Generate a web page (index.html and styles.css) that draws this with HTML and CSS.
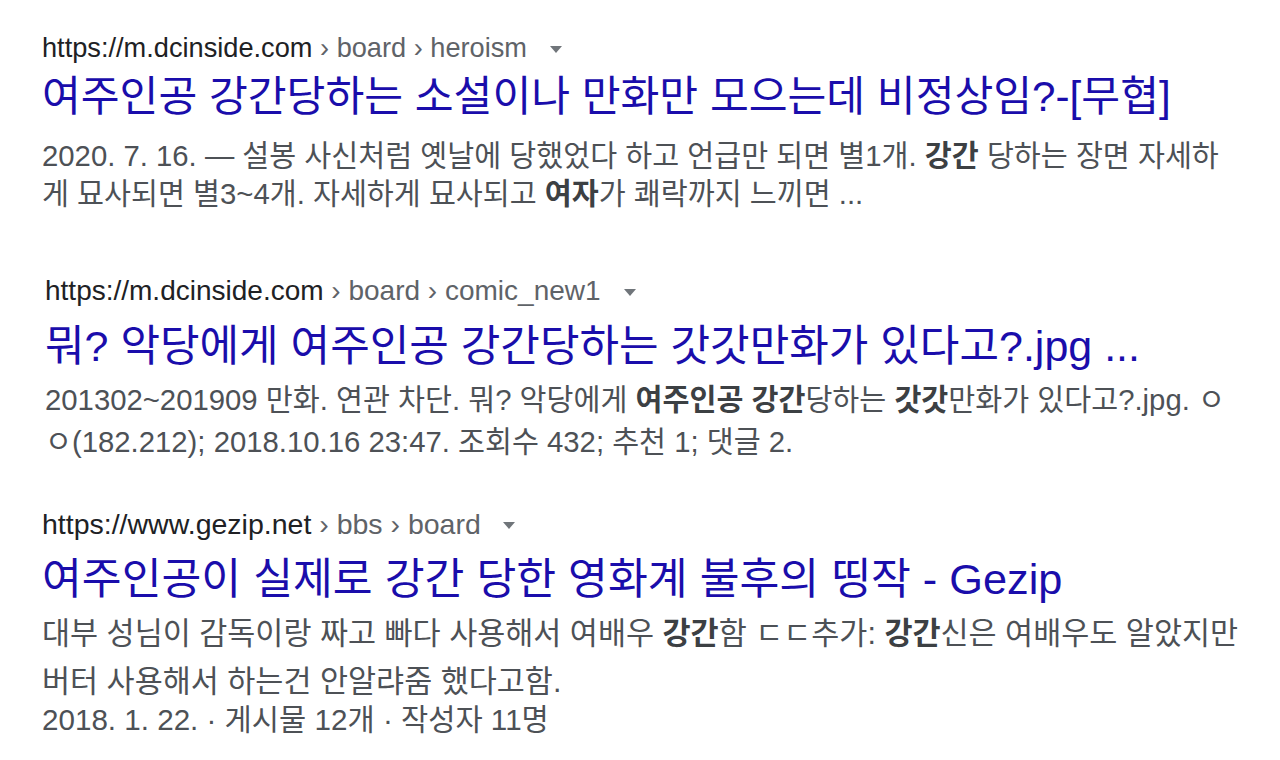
FILE: index.html
```html
<!DOCTYPE html>
<html lang="ko">
<head>
<meta charset="utf-8">
<link rel="stylesheet" href="styles.css">
</head>
<body>
<main class="results">
  <div class="result r1">
    <div class="url"><span class="host">https://m.dcinside.com</span><span class="crumb"> › board › heroism</span><span class="caret"></span></div>
    <div class="title">여주인공 강간당하는 소설이나 만화만 모으는데 비정상임?-[무협]</div>
    <div class="snippet">2020. 7. 16. — 설봉 사신처럼 옛날에 당했었다 하고 언급만 되면 별1개. <b>강간</b> 당하는 장면 자세하<br>게 묘사되면 별3~4개. 자세하게 묘사되고 <b>여자</b>가 쾌락까지 느끼면 ...</div>
  </div>
  <div class="result r2">
    <div class="url"><span class="host">https://m.dcinside.com</span><span class="crumb"> › board › comic_new1</span><span class="caret"></span></div>
    <div class="title">뭐? 악당에게 여주인공 강간당하는 갓갓만화가 있다고?.jpg ...</div>
    <div class="snippet">201302~201909 만화. 연관 차단. 뭐? 악당에게 <b>여주인공</b> <b>강간</b>당하는 <b>갓갓</b>만화가 있다고?.jpg. ㅇ<br>ㅇ(182.212); 2018.10.16 23:47. 조회수 432; 추천 1; 댓글 2.</div>
  </div>
  <div class="result r3">
    <div class="url"><span class="host">https://www.gezip.net</span><span class="crumb"> › bbs › board</span><span class="caret"></span></div>
    <div class="title">여주인공이 실제로 강간 당한 영화계 불후의 띵작 - Gezip</div>
    <div class="snippet">대부 성님이 감독이랑 짜고 빠다 사용해서 여배우 <b>강간</b>함 ㄷㄷ추가: <b>강간</b>신은 여배우도 알았지만<br>버터 사용해서 하는건 안알랴줌 했다고함.</div>
    <div class="meta">2018. 1. 22. · 게시물 12개 · 작성자 11명</div>
  </div>
</main>
</body>
</html>
```

FILE: styles.css
```css
html, body {
  margin: 0;
  padding: 0;
  background: #ffffff;
}
body {
  font-family: "Liberation Sans", "Noto Sans CJK KR", sans-serif;
  width: 1280px;
  height: 760px;
  overflow: hidden;
}
.results {
  display: flex;
  flex-direction: column;
  padding-left: 42px;
}
.url {
  font-size: 27.2px;
  line-height: 30px;
  color: #202124;
  display: flex;
  align-items: center;
  white-space: nowrap;
}
.crumb {
  color: #5f6368;
  white-space: pre;
}
.caret {
  width: 0;
  height: 0;
  border-left: 6px solid transparent;
  border-right: 6px solid transparent;
  border-top: 7px solid #70757a;
  margin-left: 23px;
  margin-top: 2px;
}
.title {
  font-size: 42.2px;
  line-height: 44px;
  color: #1a0dab;
  white-space: nowrap;
}
.snippet, .meta {
  font-size: 29.3px;
  color: #4d5156;
  white-space: nowrap;
}
.snippet b {
  color: #3c4043;
  font-weight: bold;
}
.r1 { margin-top: 33px; }
.r1 .title { margin-top: 12px; }
.r1 .snippet { margin-top: 18px; line-height: 38px; }

.r2 { margin-top: 63px; padding-left: 3px; }
.r2 .url { font-size: 28px; }
.r2 .title { margin-top: 18px; font-size: 43px; }
.r2 .snippet { margin-top: 11px; line-height: 42px; font-size: 29.3px; }

.r3 { margin-top: 46px; }
.r3 .url { font-size: 28.5px; }
.r3 .caret { margin-left: 22px; }
.r3 .title { margin-top: 18px; font-size: 43.3px; }
.r3 .snippet { margin-top: 8px; line-height: 48px; font-size: 30.5px; }
.r3 .meta { line-height: 30px; margin-top: 0; font-size: 29.6px; }
```
